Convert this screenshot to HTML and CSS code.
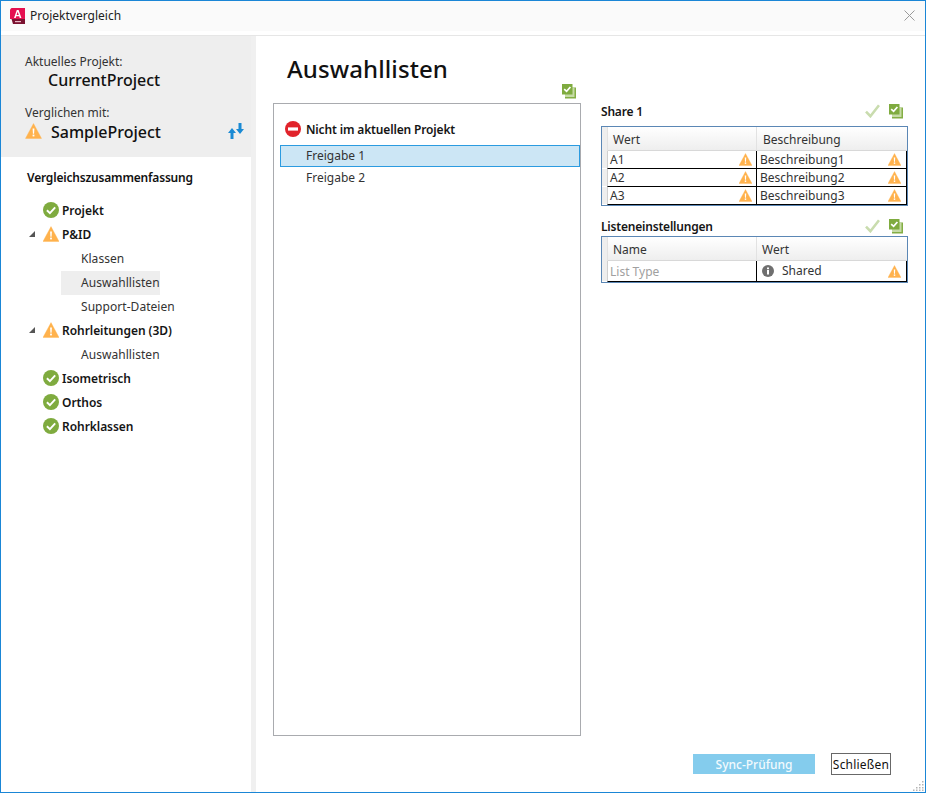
FILE: index.html
```html
<!DOCTYPE html>
<html lang="de">
<head>
<meta charset="utf-8">
<title>Projektvergleich</title>
<link rel="stylesheet" href="styles.css">
</head>
<body>
<svg class="defs" width="0" height="0" aria-hidden="true">
  <symbol id="warn" viewBox="0 0 16 16">
    <path d="M8 .6 16 15.4H0Z" fill="#ffb24d" stroke="#ffb24d" stroke-width=".4" stroke-linejoin="round"/>
    <path d="M7.100 5.600h1.800l-.3 5.200H7.400Z" fill="#fff"/>
    <rect x="7.100" y="11.600" width="1.800" height="1.800" fill="#fff"/>
  </symbol>
  <symbol id="ok" viewBox="0 0 16 16">
    <circle cx="8" cy="8" r="8" fill="#7fab3f"/>
    <path d="M3.900 8.200 6.900 11.100 12.200 5.300" fill="none" stroke="#fff" stroke-width="1.900"/>
  </symbol>
  <symbol id="copy" viewBox="0 0 15 15">
    <rect x="4" y="3.500" width="11" height="11" fill="#84ae45"/>
    <rect x="4" y="3.500" width="9.500" height="9.500" fill="#c6dba6"/>
    <rect x="1" y="0" width="10.500" height="10.500" fill="#7fab3f"/>
    <path d="M3.200 5.200 5.600 7.400 9.400 3" fill="none" stroke="#fff" stroke-width="1.700"/>
  </symbol>
  <symbol id="tick" viewBox="0 0 15 14">
    <path d="M1 7.600 5.400 12.200 14 1.200" fill="none" stroke="#c9dcae" stroke-width="2.600"/>
  </symbol>
</svg>
<div class="window">
  <header class="titlebar">
    <svg class="appicon" viewBox="0 0 15 16" aria-hidden="true">
      <path d="M0 1.500 1.500 0H15V11H0Z" fill="#e51050"/>
      <path d="M1.500 11H15V16H3Z" fill="#7b1230"/>
      <path d="M4 10 6.800 2H8.600L11.400 10H9.700L9.200 8.300H6.200L5.700 10ZM6.600 7H8.800L7.700 3.700Z" fill="#fff"/>
      <rect x="5" y="13" width="6" height="1.200" fill="#e9b8c6"/>
    </svg>
    <span class="title">Projektvergleich</span>
    <svg class="close" viewBox="0 0 11 11" aria-hidden="true"><path d="M.5.5 10.500 10.500M10.500.5.5 10.500" stroke="#9a9a9a" fill="none"/></svg>
  </header>
  <div class="rule"></div>
  <div class="body">
    <aside class="sidebar">
      <section class="projects">
        <div class="label">Aktuelles Projekt:</div>
        <div class="current">CurrentProject</div>
        <div class="label second">Verglichen mit:</div>
        <div class="compare">
          <svg class="warn-lg"><use href="#warn"/></svg>
          <span class="sample">SampleProject</span>
          <svg class="swap" viewBox="0 0 16 16" aria-hidden="true">
            <path d="M4 5 8 10H5.500V16H2.500V10H0Z" fill="#1a8ad4"/>
            <path d="M12 11 8 6H10.500V0H13.500V6H16Z" fill="#1a8ad4"/>
          </svg>
        </div>
      </section>
      <nav class="summary">
        <div class="summary-title">Vergleichszusammenfassung</div>
        <ul class="tree">
          <li class="row top"><span class="twist"></span><svg class="ico"><use href="#ok"/></svg><span>Projekt</span></li>
          <li class="row top"><span class="twist open"></span><svg class="ico"><use href="#warn"/></svg><span>P&amp;ID</span></li>
          <li class="row sub"><span>Klassen</span></li>
          <li class="row sub"><span class="selected">Auswahllisten</span></li>
          <li class="row sub"><span>Support-Dateien</span></li>
          <li class="row top"><span class="twist open"></span><svg class="ico"><use href="#warn"/></svg><span>Rohrleitungen (3D)</span></li>
          <li class="row sub"><span>Auswahllisten</span></li>
          <li class="row top"><span class="twist"></span><svg class="ico"><use href="#ok"/></svg><span>Isometrisch</span></li>
          <li class="row top"><span class="twist"></span><svg class="ico"><use href="#ok"/></svg><span>Orthos</span></li>
          <li class="row top"><span class="twist"></span><svg class="ico"><use href="#ok"/></svg><span>Rohrklassen</span></li>
        </ul>
      </nav>
    </aside>
    <main class="main">
      <h1>Auswahllisten</h1>
      <div class="columns">
        <div class="left">
          <div class="copy-row"><svg class="copy"><use href="#copy"/></svg></div>
          <div class="listbox">
            <div class="group">
              <svg class="stop" viewBox="0 0 16 16" aria-hidden="true"><circle cx="8" cy="8" r="8" fill="#e1232b"/><rect x="3" y="6.400" width="10" height="3.200" fill="#fff"/></svg>
              <span>Nicht im aktuellen Projekt</span>
            </div>
            <div class="item active">Freigabe 1</div>
            <div class="item">Freigabe 2</div>
          </div>
        </div>
        <div class="right">
          <div class="sec-head">
            <span>Share 1</span>
            <svg class="tick"><use href="#tick"/></svg>
            <svg class="copy"><use href="#copy"/></svg>
          </div>
          <div class="grid">
            <div class="g-head"><span class="gut"></span><span class="hc">Wert</span><span class="hc">Beschreibung</span></div>
            <div class="g-row"><span class="gut"></span><span class="c">A1<svg class="warn"><use href="#warn"/></svg></span><span class="c">Beschreibung1<svg class="warn"><use href="#warn"/></svg></span></div>
            <div class="g-row"><span class="gut"></span><span class="c">A2<svg class="warn"><use href="#warn"/></svg></span><span class="c">Beschreibung2<svg class="warn"><use href="#warn"/></svg></span></div>
            <div class="g-row"><span class="gut"></span><span class="c">A3<svg class="warn"><use href="#warn"/></svg></span><span class="c">Beschreibung3<svg class="warn"><use href="#warn"/></svg></span></div>
          </div>
          <div class="sec-head next">
            <span>Listeneinstellungen</span>
            <svg class="tick"><use href="#tick"/></svg>
            <svg class="copy"><use href="#copy"/></svg>
          </div>
          <div class="grid">
            <div class="g-head"><span class="gut"></span><span class="hc">Name</span><span class="hc wert">Wert</span></div>
            <div class="g-row tall"><span class="gut"></span><span class="c muted">List Type</span><span class="c"><span class="val">
              <svg class="info" viewBox="0 0 12 12" aria-hidden="true"><circle cx="6" cy="6" r="6" fill="#6f6f6f"/><rect x="5" y="5" width="2" height="4.500" fill="#fff"/><rect x="5" y="2.500" width="2" height="1.700" fill="#fff"/></svg>Shared</span><svg class="warn"><use href="#warn"/></svg></span></div>
          </div>
        </div>
      </div>
      <footer class="actions">
        <button class="btn sync" type="button">Sync-Prüfung</button>
        <button class="btn closebtn" type="button">Schließen</button>
      </footer>
      <svg class="grip" viewBox="0 0 11 11" aria-hidden="true">
        <g fill="#b5b5b5"><rect x="9" y="1" width="1.500" height="1.500"/><rect x="6" y="4" width="1.500" height="1.500"/><rect x="9" y="4" width="1.500" height="1.500"/><rect x="3" y="7" width="1.500" height="1.500"/><rect x="6" y="7" width="1.500" height="1.500"/><rect x="9" y="7" width="1.500" height="1.500"/><rect x="0" y="9.500" width="1.500" height="1.500"/><rect x="3" y="9.500" width="1.500" height="1.500"/><rect x="6" y="9.500" width="1.500" height="1.500"/><rect x="9" y="9.500" width="1.500" height="1.500"/></g>
      </svg>
    </main>
  </div>
</div>
</body>
</html>
```

FILE: styles.css
```css
* { box-sizing: border-box; }
html, body { margin: 0; padding: 0; }
body {
  width: 926px;
  height: 793px;
  overflow: hidden;
  background: #fff;
  color: #1c1c1c;
  font-family: "Noto Sans", "Liberation Sans", sans-serif;
  font-size: 12px;
}
.defs { position: absolute; }
.window {
  width: 926px;
  height: 793px;
  border: 1px solid #1a86d6;
  display: flex;
  flex-direction: column;
  background: #fff;
}
.titlebar {
  height: 30px;
  flex: none;
  display: flex;
  align-items: center;
  padding: 0 10px 1px 9px;
  background: #fafafa;
}
.appicon { width: 15px; height: 16px; flex: none; }
.title { margin-left: 5px; font-size: 12px; color: #222; }
.close { width: 11px; height: 11px; margin-left: auto; }
.rule { height: 5px; flex: none; background: #fff; border-bottom: 1px solid #e6e6e6; }
.body { flex: 1; display: flex; min-height: 0; }
.sidebar { width: 250px; flex: none; background: #fff; }
.projects {
  height: 121px;
  background: #eeeeee;
  padding: 17px 0 0 24px;
}
.label { font-size: 12px; line-height: 18px; color: #333; }
.label.second { margin-top: 15px; }
.current { font-size: 16px; font-weight: 500; line-height: 18px; color: #111; margin-left: 23px; }
.compare { display: flex; align-items: center; height: 20px; }
.warn-lg { width: 17px; height: 16px; flex: none; margin-bottom: 3px; }
.sample { font-size: 16px; font-weight: 500; color: #111; margin-left: 9px; }
.swap { width: 16px; height: 16px; margin: 0 7px 2px auto; flex: none; }
.summary { padding: 12px 0 0 26px; }
.summary-title { font-weight: 600; font-size: 12px; line-height: 18px; color: #111; letter-spacing: -.19px; }
.tree { list-style: none; margin: 11px 0 0; padding: 0; }
.row { height: 24px; display: flex; align-items: center; }
.top { font-weight: 600; color: #151515; letter-spacing: -.05px; }
.twist { width: 16px; flex: none; height: 6px; }
.twist.open::before {
  content: "";
  display: block;
  width: 0;
  height: 0;
  margin-left: 2px;
  border-style: solid;
  border-width: 0 0 6px 6px;
  border-color: transparent transparent #555 transparent;
}
.ico { width: 16px; height: 16px; flex: none; margin-right: 3px; }
.sub { padding-left: 34px; color: #333; }
.sub span { display: block; line-height: 24px; padding-left: 20px; margin-top: 2px; letter-spacing: .05px; }
.sub .selected { background: #eeeeee; }
.main {
  flex: 1;
  margin-left: 5px;
  position: relative;
  display: flex;
  flex-direction: column;
  box-shadow: -5px 0 0 #f0f0f0;
  padding: 0 17px;
}
h1 { margin: 19px 0 0 14px; font-size: 24px; line-height: 28px; font-weight: 500; color: #111; letter-spacing: .1px; }
.columns { display: flex; gap: 20px; margin-top: 1px; }
.left { width: 308px; flex: none; }
.copy-row { height: 19px; display: flex; justify-content: flex-end; padding-right: 5px; }
.copy { width: 15px; height: 15px; flex: none; }
.listbox {
  height: 633px;
  border: 1px solid #a9abaf;
  padding: 15px 0 0 6px;
}
.group { display: flex; align-items: center; height: 20px; padding-left: 5px; font-weight: 600; color: #151515; margin-bottom: 6px; letter-spacing: -.15px; }
.stop { width: 16px; height: 16px; margin-right: 5px; flex: none; }
.item { height: 22px; line-height: 20px; padding-left: 25px; width: 300px; color: #333; border: 1px solid transparent; }
.item.active { background: #cce6f5; border-color: #2b9be0; }
.right { width: 307px; flex: none; padding-top: 18px; }
.sec-head { height: 18px; display: flex; align-items: center; font-weight: 600; color: #151515; line-height: 18px; padding-right: 5px; letter-spacing: -.2px; }
.sec-head span { padding-top: 2px; }
.sec-head.next { margin-top: 11px; }
.tick { width: 15px; height: 14px; margin-left: auto; margin-right: 8px; }
.grid { border: 1px solid #5b87b5; margin-top: 6px; }
.sec-head.next + .grid { margin-top: 1px; }
.g-head, .g-row { display: grid; grid-template-columns: 5px 149px 151px; }
.g-head { height: 24px; background: linear-gradient(#ffffff, #eeeeee); border-bottom: 1px solid #d8d8d8; color: #333; }
.gut { background: #eeeeee; border-bottom: 1px solid #fff; }
.g-head .gut { border-bottom: 0; }
.hc { padding-left: 5px; line-height: 25px; border-left: 1px solid #e2e2e2; }
.hc:last-child { padding-left: 6px; }
.hc.wert:last-child { padding-left: 5px; }
.g-row { height: 18px; }
.g-row.tall { height: 21px; }
.c {
  display: flex;
  align-items: center;
  justify-content: space-between;
  padding: 0 4px 0 2px;
  border-left: 1px solid #000;
  border-bottom: 1px solid #000;
  color: #333;
  line-height: 17px;
  min-width: 0;
}
.c:last-child { border-right: 1px solid #000; padding: 0 5px 0 3px; }
.gut + .c { border-left-color: #d0d0d0; }
.c.muted { color: #a0a0a0; }
.warn { width: 13px; height: 13px; flex: none; }
.val { display: flex; align-items: center; margin: 0 0 2px 2px; }
.info { width: 12px; height: 12px; margin: 2px 8px 0 0; flex: none; }
.actions { display: flex; justify-content: flex-end; align-items: center; gap: 16px; margin-top: 17px; padding-right: 17px; }
.btn { font: inherit; padding: 0; border-radius: 0; }
.sync { width: 122px; height: 20px; border: 0; background: #84cced; color: #f2fafd; font-weight: 500; }
.closebtn { width: 60px; height: 22px; border: 1px solid #686868; background: #fff; color: #111; letter-spacing: .2px; }
.grip { position: absolute; right: 1px; bottom: 1px; width: 11px; height: 11px; }
```
